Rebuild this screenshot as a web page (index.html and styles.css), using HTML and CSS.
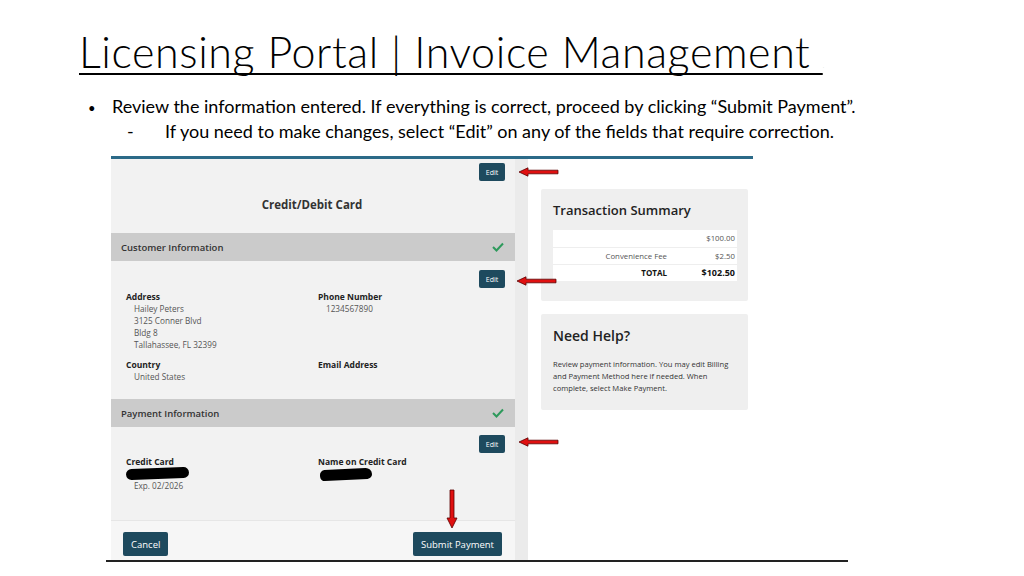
FILE: index.html
```html
<!DOCTYPE html>
<html>
<head>
<meta charset="utf-8">
<link rel="stylesheet" href="styles.css">
</head>
<body>
<div class="slide">
  <h1 class="title"><span class="title-text">Licensing Portal | Invoice Management&nbsp;</span><span class="dot">.</span></h1>
  <ul class="bullets">
    <li class="b1"><span class="mark">•</span>Review the information entered. If everything is correct, proceed by clicking “Submit Payment”.</li>
    <li class="b2"><span class="dash">-</span>If you need to make changes, select “Edit” on any of the fields that require correction.</li>
  </ul>

  <div class="shot">
    <div class="main">
      <div class="main-inner">
        <div class="head">
          <div class="edit-row"><button class="edit">Edit</button></div>
          <div class="card-title">Credit/Debit Card</div>
        </div>
        <div class="bar"><span>Customer Information</span><svg class="check" width="12" height="10" viewBox="0 0 12 10"><polyline points="1,5 4.5,8.5 11,1.5" fill="none" stroke="#2e9a5c" stroke-width="2"/></svg></div>
        <div class="edit-row r2"><button class="edit">Edit</button></div>
        <div class="fields">
          <div class="field">
            <div class="label">Address</div>
            <div class="val">Hailey Peters</div>
            <div class="val">3125 Conner Blvd</div>
            <div class="val">Bldg 8</div>
            <div class="val">Tallahassee, FL 32399</div>
          </div>
          <div class="field">
            <div class="label">Phone Number</div>
            <div class="val">1234567890</div>
          </div>
          <div class="field f2">
            <div class="label">Country</div>
            <div class="val">United States</div>
          </div>
          <div class="field f2">
            <div class="label">Email Address</div>
          </div>
        </div>
        <div class="bar"><span>Payment Information</span><svg class="check" width="12" height="10" viewBox="0 0 12 10"><polyline points="1,5 4.5,8.5 11,1.5" fill="none" stroke="#2e9a5c" stroke-width="2"/></svg></div>
        <div class="edit-row r3"><button class="edit">Edit</button></div>
        <div class="fields pay">
          <div class="field">
            <div class="label">Credit Card</div>
            <div class="scribble s1"></div>
            <div class="val">Exp. 02/2026</div>
          </div>
          <div class="field">
            <div class="label">Name on Credit Card</div>
            <div class="scribble s2"></div>
          </div>
        </div>
        <div class="footer">
          <button class="btn">Cancel</button>
          <button class="btn">Submit Payment</button>
        </div>
      </div>
      <div class="strip"></div>
    </div>
    <div class="side">
      <div class="box summary">
        <div class="box-title">Transaction Summary</div>
        <table class="sum">
          <tr><td></td><td class="amt">$100.00</td></tr>
          <tr><td class="lbl">Convenience Fee</td><td class="amt">$2.50</td></tr>
          <tr class="total"><td class="lbl">TOTAL</td><td class="amt">$102.50</td></tr>
        </table>
      </div>
      <div class="box help">
        <div class="box-title big">Need Help?</div>
        <p class="help-text">Review payment information. You may edit Billing and Payment Method here if needed. When complete, select Make Payment.</p>
      </div>
    </div>

    <svg class="arrow a1" width="42" height="10" viewBox="0 0 42 10"><polygon points="1,5 10,0.8 10,3.2 40,3.2 40,6.8 10,6.8 10,9.2" fill="#e01010" stroke="#5a0000" stroke-width="0.8"/></svg>
    <svg class="arrow a2" width="42" height="10" viewBox="0 0 42 10"><polygon points="1,5 10,0.8 10,3.2 40,3.2 40,6.8 10,6.8 10,9.2" fill="#e01010" stroke="#5a0000" stroke-width="0.8"/></svg>
    <svg class="arrow a3" width="42" height="10" viewBox="0 0 42 10"><polygon points="1,5 10,0.8 10,3.2 40,3.2 40,6.8 10,6.8 10,9.2" fill="#e01010" stroke="#5a0000" stroke-width="0.8"/></svg>
    <svg class="arrow a4" width="12" height="40" viewBox="0 0 12 40"><polygon points="6,39 1,29 4,29 4,1 8,1 8,29 11,29" fill="#e01010" stroke="#5a0000" stroke-width="0.8"/></svg>
  </div>
  <div class="baseline"></div>
</div>
</body>
</html>
```

FILE: styles.css
```css
* { box-sizing: border-box; }
html, body { margin: 0; padding: 0; background: #fff; }
.slide {
  width: 1024px;
  height: 576px;
  overflow: hidden;
  font-family: "Lato", "Open Sans", sans-serif;
  color: #000;
}
.title {
  margin: 0;
  padding: 27px 0 0 79px;
  font-weight: 300;
  font-size: 43px;
  letter-spacing: 0.6px;
  line-height: 50px;
  height: 86px;
  white-space: nowrap;
}
.title-text {
  text-decoration: underline;
  text-decoration-thickness: 2px;
  text-underline-offset: 5px;
  text-decoration-skip-ink: none;
}
.dot { font-size: 6px; color: #bbb; }
.bullets {
  list-style: none;
  margin: 0;
  padding: 9px 0 0 0;
  font-size: 18px;
  line-height: 23px;
  height: 70px;
}
.bullets li { white-space: nowrap; }
.b1 { padding-left: 88px; }
.mark { display: inline-block; width: 24px; font-size: 13px; }
.b2 { padding-left: 127px; }
.dash { display: inline-block; width: 38px; }

.shot {
  position: relative;
  margin-left: 111px;
  width: 642px;
  height: 404px;
  border-top: 3px solid #2b6a88;
  display: flex;
  font-family: "Open Sans", sans-serif;
}
.main {
  width: 417px;
  display: flex;
  background: #f2f2f2;
}
.main-inner { width: 404px; }
.strip { flex: 1; background: #ebebeb; }
.head { height: 74px; }
.edit-row { display: flex; justify-content: flex-end; padding-right: 10px; padding-top: 4px; }
.edit {
  border: 0;
  background: #1e4a5e;
  color: #fff;
  font-family: "Open Sans", sans-serif;
  font-size: 7px;
  width: 26px;
  height: 18px;
  border-radius: 2px;
  padding: 0;
}
.card-title {
  text-align: center;
  font-weight: 700;
  font-size: 11.5px;
  color: #333;
  margin-top: 16px;
  padding-right: 2px;
}
.bar {
  height: 28px;
  background: #cbcbcb;
  display: flex;
  justify-content: space-between;
  align-items: center;
  padding: 0 10px;
  font-size: 9.5px;
  font-weight: 600;
  color: #333;
}
.check { margin-right: 1px; }
.r2 { padding-top: 9px; height: 27px; }
.r3 { padding-top: 8px; height: 26px; }
.fields {
  display: grid;
  grid-template-columns: 192px 1fr;
  align-content: start;
  padding: 3px 0 0 15px;
  height: 111px;
}
.field .label { font-size: 8.5px; font-weight: 700; color: #222; line-height: 12px; }
.field .val { font-size: 8.2px; color: #555; line-height: 12px; padding-left: 8px; }
.f2 { margin-top: 8px; }
.pay { padding-top: 3px; height: 54px; }
.scribble { background: #000; border-radius: 6px; height: 11px; margin: 0 0 1px 0; }
.s1 { width: 63px; transform: rotate(-2deg); }
.s2 { width: 52px; margin-left: 2px; margin-top: 1px; transform: rotate(-3deg); border-radius: 6px 8px 6px 6px; }
.footer {
  margin-top: 13px;
  border-top: 1px solid #e6e6e6;
  background: #f6f6f6;
  height: 40px;
  display: flex;
  justify-content: space-between;
  align-items: flex-end;
  padding: 0 13px 4px 12px;
}
.btn {
  border: 0;
  background: #1e4a5e;
  color: #fff;
  font-family: "Open Sans", sans-serif;
  font-size: 9.5px;
  height: 24px;
  padding: 0 8px;
  border-radius: 2px;
}
.side { padding: 30px 0 0 13px; }
.box { width: 207px; background: #efefef; border-radius: 2px; }
.summary { height: 112px; padding: 12px 11px 0 12px; }
.box-title { font-size: 13px; font-weight: 600; color: #222; line-height: 18px; }
.sum { width: 184px; border-collapse: collapse; background: #fff; margin-top: 11px; font-size: 7.8px; color: #555; }
.sum td { height: 17px; border-top: 1px solid #eee; padding: 0 2px; text-align: right; }
.sum tr:first-child td { border-top: 0; }
.sum td.amt { width: 45px; }
.sum td.lbl { padding-right: 25px; }
.sum .total td { font-weight: 700; color: #111; font-size: 8px; }
.sum .total td.amt { font-size: 9px; }
.help { height: 96px; margin-top: 13px; padding: 11px 11px 0 12px; }
.box-title.big { font-size: 14px; font-weight: 600; margin-top: 2px; }
.help-text { margin: 13px 0 0 0; width: 180px; font-size: 7.6px; line-height: 12px; color: #333; }
.arrow { position: absolute; }
.a1 { left: 407px; top: 8px; }
.a2 { left: 405px; top: 117px; }
.a3 { left: 407px; top: 278px; }
.a4 { left: 335px; top: 330px; }
.baseline { margin-left: 106px; width: 742px; height: 2px; background: #222; }
```
